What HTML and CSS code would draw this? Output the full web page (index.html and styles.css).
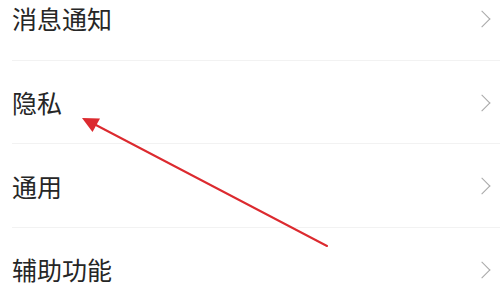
FILE: index.html
```html
<!DOCTYPE html>
<html lang="zh">
<head>
  <meta charset="UTF-8">
  <meta name="viewport" content="width=device-width, initial-scale=1.0">
  <title>设置</title>
  <link rel="stylesheet" href="styles.css">
</head>
<body>

  <!-- Liste des réglages -->
  <ul class="settings">
    <li class="row"><span class="label">消息通知</span><span class="chevron"></span></li>
    <li class="row"><span class="label">隐私</span><span class="chevron"></span></li>
    <li class="row"><span class="label">通用</span><span class="chevron"></span></li>
    <li class="row"><span class="label">辅助功能</span><span class="chevron"></span></li>
  </ul>

  <!-- Flèche d'annotation -->
  <svg class="annotation" width="500" height="300" viewBox="0 0 500 300">
    <line x1="327" y1="246" x2="94" y2="124" stroke="#dc2a2f" stroke-width="2" stroke-linecap="round"/>
    <polygon points="82,118 100,118.5 92.5,132" fill="#dc2a2f"/>
  </svg>

</body>
</html>
```

FILE: styles.css
```css
html {
  overflow: hidden;
}
body {
  margin: 0;
  padding: 0;
  background-color: #fff;
  font-family: "Noto Sans CJK SC", "Noto Sans", sans-serif;
  overflow: hidden;
  position: relative;
  width: 500px;
  height: 300px;
}
.settings {
  list-style-type: none;
  margin: -23px 0 0 12px;
  padding: 0;
  height: 323px;
  overflow: hidden;
}
.row {
  box-sizing: border-box;
  height: 83.7px;
  display: flex;
  align-items: center;
  justify-content: space-between;
  border-bottom: 1px solid #f2f2f2;
  padding-top: 1px;
}
.label {
  font-size: 25px;
  color: #262626;
  line-height: 1;
}
.chevron {
  width: 11px;
  height: 11px;
  border-top: 1.7px solid #a8a8a8;
  border-right: 1.7px solid #a8a8a8;
  transform: rotate(45deg);
  margin-right: 12px;
}
.annotation {
  position: absolute;
  top: 0;
  left: 0;
}
```
